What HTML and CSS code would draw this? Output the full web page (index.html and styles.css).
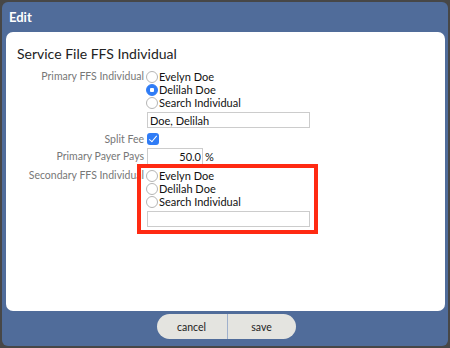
FILE: index.html
```html
<!DOCTYPE html>
<html lang="en">
<head>
    <meta charset="UTF-8">
    <title>Edit</title>
    <link rel="stylesheet" href="styles.css">
</head>
<body>
    <div class="dialog">
        <div class="dialog-title">Edit</div>
        <div class="panel">
            <h2>Service File FFS Individual</h2>
            <div class="form">
                <div class="row">
                    <div class="field-label">Primary FFS Individual</div>
                    <div class="field">
                        <label class="opt"><input type="radio" name="primary"> Evelyn Doe</label>
                        <label class="opt"><input type="radio" name="primary" checked> Delilah Doe</label>
                        <label class="opt"><input type="radio" name="primary"> Search Individual</label>
                        <input type="text" class="text wide" value="Doe, Delilah">
                    </div>
                </div>
                <div class="row split">
                    <div class="field-label">Split Fee</div>
                    <div class="field">
                        <input type="checkbox" class="check" checked>
                    </div>
                </div>
                <div class="row pays">
                    <div class="field-label">Primary Payer Pays</div>
                    <div class="field inline">
                        <input type="text" class="text pct" value="50.0"> %
                    </div>
                </div>
                <div class="row secondary">
                    <div class="field-label">Secondary FFS Individual</div>
                    <div class="field">
                        <label class="opt"><input type="radio" name="secondary"> Evelyn Doe</label>
                        <label class="opt"><input type="radio" name="secondary"> Delilah Doe</label>
                        <label class="opt"><input type="radio" name="secondary"> Search Individual</label>
                        <input type="text" class="text wide" value="">
                    </div>
                </div>
            </div>
        </div>
        <div class="buttons">
            <button class="btn cancel">cancel</button>
            <button class="btn save">save</button>
        </div>
        <div class="highlight"></div>
    </div>
</body>
</html>
```

FILE: styles.css
```css
body {
    margin: 0;
    background-color: #474747;
    font-family: Lato, "Open Sans", sans-serif;
}
.dialog {
    position: relative;
    margin: 2px 2px 0;
    width: 446px;
    height: 344px;
    background-color: #506c9a;
    border-radius: 6px;
}
.dialog-title {
    height: 30px;
    line-height: 30px;
    padding-left: 7px;
    color: #fff;
    font-size: 13px;
    font-weight: bold;
}
.panel {
    margin: 0 3px 0 4px;
    height: 279px;
    box-sizing: border-box;
    padding: 13px 10px 0;
    background-color: #fff;
    border-radius: 7px;
}
h2 {
    margin: 0 0 8px 1px;
    font-size: 14px;
    font-weight: normal;
    color: #222;
}
.row {
    display: grid;
    grid-template-columns: 128px 1fr;
    column-gap: 2px;
}
.field-label {
    text-align: right;
    font-size: 10.5px;
    line-height: 13px;
    color: #777;
    white-space: nowrap;
}
.field {
    font-size: 11px;
    color: #111;
}
.opt {
    display: flex;
    align-items: center;
    height: 13px;
    line-height: 13px;
}
input[type="radio"] {
    appearance: none;
    width: 12px;
    height: 12px;
    margin: 0 1px 0 0;
    border: 1px solid #b5b5b5;
    border-radius: 50%;
    background-color: #fff;
    box-sizing: border-box;
}
input[type="radio"]:checked {
    border-color: #2f7cf6;
    background: radial-gradient(circle, #fff 0 2px, #2f7cf6 2.5px);
}
.text {
    display: block;
    height: 16px;
    box-sizing: border-box;
    border: 1px solid #ccc;
    padding: 0 2px;
    font-family: Lato, sans-serif;
    font-size: 11px;
    color: #111;
    outline: none;
}
.wide {
    width: 163px;
    margin: 3px 0 0 1px;
}
.split {
    margin-top: 5px;
}
.check {
    appearance: none;
    display: block;
    width: 12px;
    height: 12px;
    margin: 0 0 0 1px;
    border-radius: 3px;
    background-color: #2f7cf6;
    position: relative;
}
.check:checked::after {
    content: "";
    position: absolute;
    left: 4px;
    top: 1px;
    width: 3px;
    height: 7px;
    border: solid #fff;
    border-width: 0 1.5px 1.5px 0;
    transform: rotate(40deg);
}
.pays {
    margin-top: 2px;
}
.pays .field-label {
    line-height: 17px;
}
.pays .text {
    height: 17px;
}
.inline {
    display: flex;
    align-items: center;
    gap: 2px;
}
.pct {
    width: 56px;
    margin-left: 1px;
    text-align: right;
    padding-right: 1px;
}
.secondary {
    margin-top: 4px;
}
.secondary .wide {
    margin-top: 3px;
}
.buttons {
    display: flex;
    justify-content: center;
    padding: 3px 0 0 2px;
}
.btn {
    height: 25px;
    border: none;
    background-color: #e4e4e0;
    font-family: Lato, sans-serif;
    font-size: 10.5px;
    color: #222;
    padding: 0;
}
.cancel {
    width: 70px;
    border-radius: 13px 0 0 13px;
}
.save {
    width: 69px;
    border-left: 1px solid #9fb0cc;
    border-radius: 0 13px 13px 0;
}
.highlight {
    position: absolute;
    left: 135px;
    top: 162px;
    width: 181px;
    height: 70px;
    box-sizing: border-box;
    border: 4px solid #ff2a12;
}
```
